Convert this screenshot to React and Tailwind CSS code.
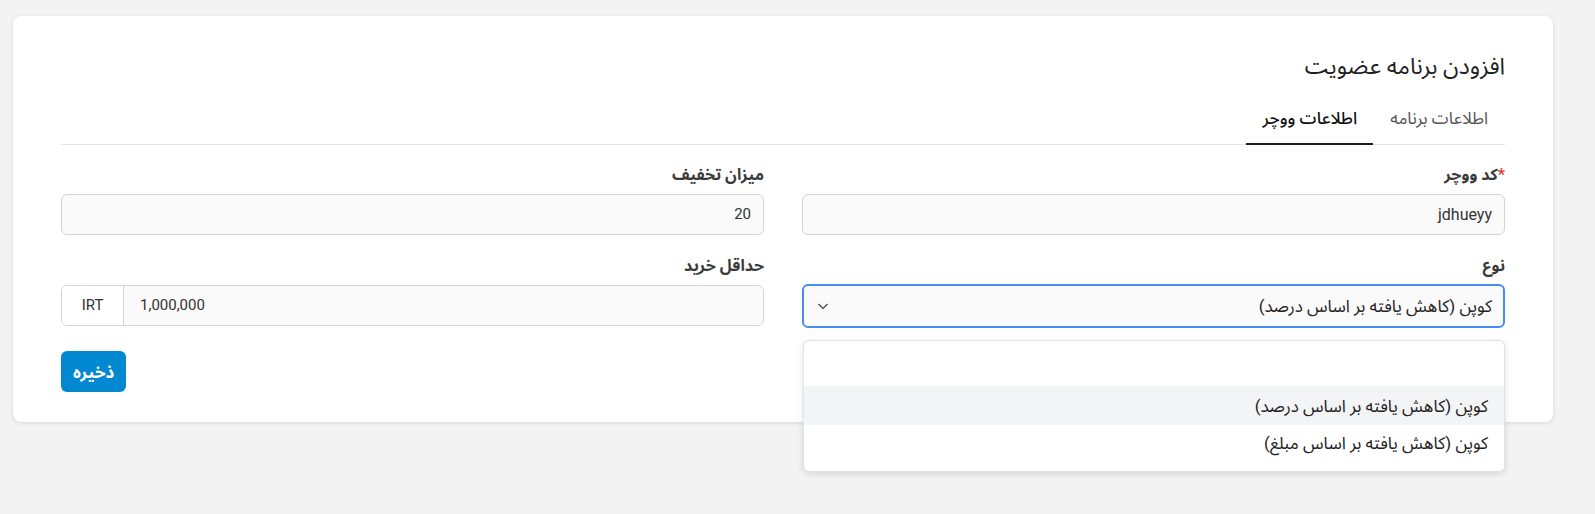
import React from "react";

const font = { fontFamily: 'Roboto, "Noto Sans Arabic", "DejaVu Sans", sans-serif' };

function Field({ label, required, children }) {
  return (
    <div className="flex flex-col">
      <label className="mb-[9px] text-[16px] font-bold leading-5 text-[#3a3a3a]">
        {required && <span className="text-[#e53935]">*</span>}
        {label}
      </label>
      {children}
    </div>
  );
}

export default function App() {
  return (
    <div className="min-h-screen bg-[#f3f3f3] pt-4 pl-[13px]" style={font}>
      <div
        dir="rtl"
        className="w-[1540px] rounded-lg bg-white px-12 pt-[37px] pb-[30px] shadow-[0_1px_4px_rgba(0,0,0,0.12)]"
      >
        <h1 className="text-[23px] leading-7 text-[#1f1f1f]">افزودن برنامه عضویت</h1>
        <div className="mt-[14px] flex border-b border-[#e3e3e3]">
          <div className="px-[17px] pt-[11px] pb-[14px] text-[17px] leading-6 text-[#555]">اطلاعات برنامه</div>
          <div className="-mb-px border-b-2 border-[#1c1c2b] px-4 pt-[11px] pb-[13px] text-[17px] font-medium leading-6 text-[#111]">
            اطلاعات ووچر
          </div>
        </div>
        <div className="mt-[20px] grid grid-cols-2 gap-x-[38px] gap-y-[21px]">
          <Field label="کد ووچر" required>
            <div className="flex h-[41px] items-center rounded-md border border-[#d4d4d8] bg-[#fafafa] px-3 text-[16px] text-[#333]">
              jdhueyy
            </div>
          </Field>
          <Field label="میزان تخفیف">
            <div className="flex h-[41px] items-center rounded-md border border-[#d4d4d8] bg-[#fafafa] px-3 text-[15px] text-[#333]">
              20
            </div>
          </Field>
          <Field label="نوع">
            <div className="relative">
              <div className="flex h-[44px] -mt-[1px] items-center justify-between rounded-md border-2 border-[#4a8af4] bg-[#fafafa] pr-[11px] pl-[12px] text-[17px] leading-6 text-[#222]">
                <span>کوپن (کاهش یافته بر اساس درصد)</span>
                <svg width="14" height="14" viewBox="0 0 14 14" fill="none" stroke="#444" strokeWidth="1.2">
                  <path d="M2.5 5 L7 9.5 L11.5 5" />
                </svg>
              </div>
              <div className="absolute top-[55px] right-0 left-[1px] z-10 overflow-hidden rounded-md border border-[#e2e2e2] bg-white shadow-[0_2px_6px_rgba(0,0,0,0.12)]">
                <div className="h-[45px]"></div>
                <div className="flex h-[39px] items-center bg-[#f3f4f6] px-4 text-[17px] leading-6 text-[#222]">
                  کوپن (کاهش یافته بر اساس درصد)
                </div>
                <div className="flex h-[40px] items-center px-4 pb-1 text-[17px] leading-6 text-[#222]">
                  کوپن (کاهش یافته بر اساس مبلغ)
                </div>
                <div className="h-[6px]"></div>
              </div>
            </div>
          </Field>
          <Field label="حداقل خرید">
            <div dir="ltr" className="flex h-[41px] overflow-hidden rounded-md border border-[#d4d4d8] text-[15px] text-[#333]">
              <div className="flex w-[62px] items-center justify-center border-r border-[#d4d4d8] bg-white">IRT</div>
              <div className="flex flex-1 items-center bg-[#fafafa] px-4">1,000,000</div>
            </div>
          </Field>
        </div>
        <div className="mt-[23px] flex justify-end">
          <button className="h-[41px] rounded-md bg-[#0288d1] px-[12px] text-[17px] font-bold leading-6 text-white">ذخیره</button>
        </div>
      </div>
    </div>
  );
}
